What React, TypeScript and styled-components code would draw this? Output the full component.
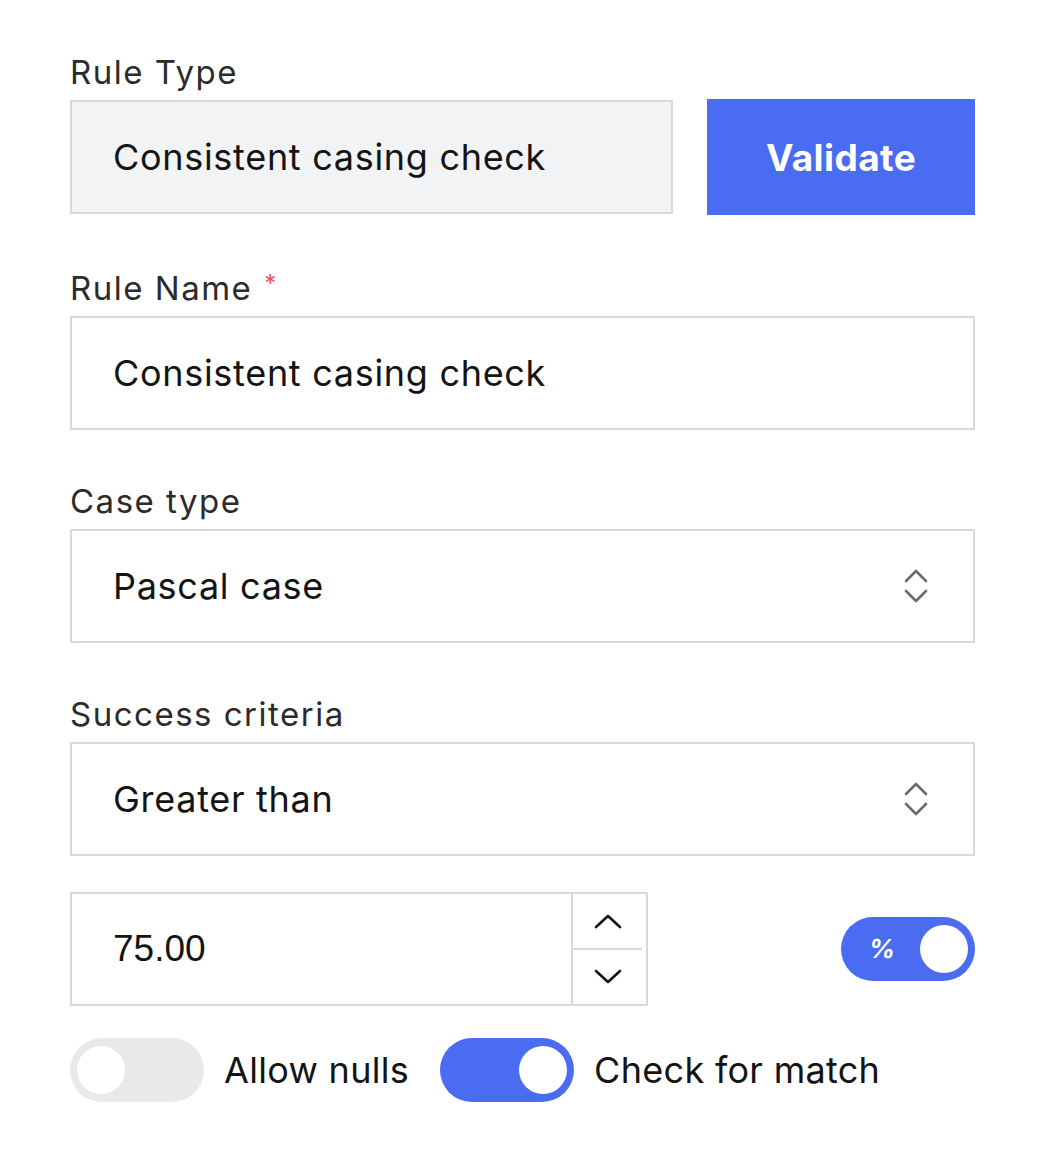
import React from "react";
import styled, { createGlobalStyle } from "styled-components";

const Global = createGlobalStyle`
  html, body { margin: 0; padding: 0; background: #ffffff; }
  body { font-family: Inter, "Open Sans", sans-serif; color: #1c1c1c; }
  * { box-sizing: border-box; }
`;

const BLUE = "#4a6cf0";

const Page = styled.div`
  width: 1040px;
  padding: 52px 65px 40px 70px;
  display: flex;
  flex-direction: column;
`;

const Field = styled.div<{ $gap?: number }>`
  display: flex;
  flex-direction: column;
  margin-bottom: ${(p) => p.$gap ?? 51}px;
`;

const Label = styled.div`
  font-size: 33px;
  line-height: 40px;
  height: 40px;
  color: #2b2b2b;
  margin-bottom: 8px;
  letter-spacing: 1.5px;
`;

const Star = styled.span`
  color: #f0555e;
  font-size: 24px;
  line-height: 0;
  vertical-align: 8px;
  margin-left: 12px;
`;

const Row = styled.div`
  display: flex;
  align-items: center;
  gap: 34px;
`;

const Box = styled.div<{ $filled?: boolean; $width?: number }>`
  height: 114px;
  width: ${(p) => (p.$width ? `${p.$width}px` : "100%")};
  border: 2px solid #d6d9dd;
  background: ${(p) => (p.$filled ? "#f2f3f5" : "#ffffff")};
  display: flex;
  align-items: center;
  padding: 0 44px 0 41px;
  font-size: 36px;
  letter-spacing: 0.7px;
  color: #141414;
`;

const BoxText = styled.span`
  flex: 1;
`;

const Button = styled.button`
  width: 268px;
  height: 116px;
  margin: -1px 0;
  border: none;
  background: ${BLUE};
  color: #ffffff;
  font-family: inherit;
  font-size: 37px;
  font-weight: 700;
  letter-spacing: 0.4px;
  cursor: pointer;
`;

const NumberRow = styled.div`
  display: flex;
  align-items: center;
  justify-content: space-between;
  margin-bottom: 32px;
`;

const NumberBox = styled.div`
  width: 578px;
  height: 114px;
  border: 2px solid #d6d9dd;
  display: flex;
`;

const NumberValue = styled.div`
  flex: 1;
  display: flex;
  align-items: center;
  padding-left: 41px;
  font-family: "Liberation Sans", Arial, sans-serif;
  font-size: 37px;
  color: #141414;
`;

const Stepper = styled.div`
  width: 75px;
  border-left: 2px solid #d6d9dd;
  display: flex;
  flex-direction: column;
  padding-right: 4px;
`;

const StepBtn = styled.div<{ $top?: boolean }>`
  flex: 1;
  display: flex;
  align-items: center;
  justify-content: center;
  ${(p) => (p.$top ? "border-bottom: 2px solid #d6d9dd;" : "")}
`;

const Track = styled.div<{ $on: boolean }>`
  width: 134px;
  height: 64px;
  border-radius: 32px;
  background: ${(p) => (p.$on ? BLUE : "#e8e9eb")};
  display: flex;
  align-items: center;
  justify-content: ${(p) => (p.$on ? "flex-end" : "flex-start")};
  padding: 0 7px;
  flex-shrink: 0;
  position: relative;
`;

const Knob = styled.div`
  width: 48px;
  height: 48px;
  border-radius: 50%;
  background: #ffffff;
`;

const PercentMark = styled.span`
  position: absolute;
  left: 28px;
  top: 50%;
  transform: translateY(-52%) skewX(-8deg);
  color: #ffffff;
  font-size: 26px;
  font-weight: 700;
`;

const ToggleRow = styled.div`
  display: flex;
  align-items: center;
`;

const ToggleLabel = styled.span`
  font-size: 36px;
  letter-spacing: 0.3px;
  color: #141414;
  margin: 0 31px 0 20px;
`;

const UpDown = () => (
  <svg width="26" height="38" viewBox="0 0 26 38" fill="none">
    <path d="M3 14 L13 4 L23 14" stroke="#6b6b6b" strokeWidth="2.6" strokeLinecap="round" strokeLinejoin="round" />
    <path d="M3 24 L13 34 L23 24" stroke="#6b6b6b" strokeWidth="2.6" strokeLinecap="round" strokeLinejoin="round" />
  </svg>
);

const Chevron = ({ up }: { up?: boolean }) => (
  <svg width="30" height="16" viewBox="0 0 30 16" fill="none">
    <path
      d={up ? "M3 14 L15 3 L27 14" : "M3 2 L15 13 L27 2"}
      stroke="#141414"
      strokeWidth="2.6"
      strokeLinecap="round"
      strokeLinejoin="round"
    />
  </svg>
);

export default function App() {
  return (
    <>
      <Global />
      <Page>
        <Field $gap={54}>
          <Label>Rule Type</Label>
          <Row>
            <Box $filled $width={603}>
              <BoxText>Consistent casing check</BoxText>
            </Box>
            <Button>Validate</Button>
          </Row>
        </Field>
        <Field>
          <Label>
            Rule Name<Star>*</Star>
          </Label>
          <Box>
            <BoxText>Consistent casing check</BoxText>
          </Box>
        </Field>
        <Field>
          <Label>Case type</Label>
          <Box>
            <BoxText>Pascal case</BoxText>
            <UpDown />
          </Box>
        </Field>
        <Field $gap={36}>
          <Label>Success criteria</Label>
          <Box>
            <BoxText>Greater than</BoxText>
            <UpDown />
          </Box>
        </Field>
        <NumberRow>
          <NumberBox>
            <NumberValue>75.00</NumberValue>
            <Stepper>
              <StepBtn $top>
                <Chevron up />
              </StepBtn>
              <StepBtn>
                <Chevron />
              </StepBtn>
            </Stepper>
          </NumberBox>
          <Track $on>
            <PercentMark>%</PercentMark>
            <Knob />
          </Track>
        </NumberRow>
        <ToggleRow>
          <Track $on={false}>
            <Knob />
          </Track>
          <ToggleLabel>Allow nulls</ToggleLabel>
          <Track $on>
            <Knob />
          </Track>
          <ToggleLabel>Check for match</ToggleLabel>
        </ToggleRow>
      </Page>
    </>
  );
}
